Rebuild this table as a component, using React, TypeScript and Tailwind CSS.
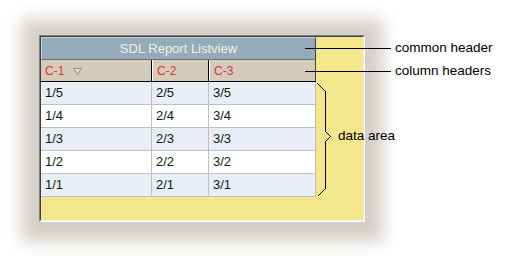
const rows = [
  ["1/5", "2/5", "3/5"],
  ["1/4", "2/4", "3/4"],
  ["1/3", "2/3", "3/3"],
  ["1/2", "2/2", "3/2"],
  ["1/1", "2/1", "3/1"],
]

function SortArrow() {
  return (
    <svg width="10" height="8" viewBox="0 0 10 8" className="ml-[9px] mt-[2px]">
      <polygon points="0.5,0.5 8.5,0.5 4.5,6.5" fill="#e4ddd0" stroke="#8c8c8c" strokeWidth="1" />
    </svg>
  )
}

export default function App() {
  return (
    <div className="relative w-[524px] h-[256px] overflow-hidden bg-white pl-[39px] pt-[35px] font-['Liberation_Sans',Arial,sans-serif]">
      {/* sunken panel */}
      <div className="w-[326px] h-[187px] border border-t-[#808080] border-l-[#808080] border-r-white border-b-white shadow-[0_2px_16px_18px_#d4d0c8]">
        <div className="h-full border border-t-[#404040] border-l-[#404040] border-r-[#ecebe4] border-b-[#ecebe4] bg-[#f4e68a]">
          <div className="w-[275px]">
            {/* common header */}
            <div className="h-[23px] flex items-center justify-center bg-[#95abb9] border-t border-l border-t-[#c9d5dd] border-l-[#c9d5dd] border-b border-b-[#5f6e78] border-r border-r-[#404040] text-[13px] text-[#f3f1e2]">
              SDL Report Listview
            </div>
            {/* column headers */}
            <div className="flex h-[22px] bg-[#d4cbba] border-b border-b-black text-[12px] text-[#e03434]">
              <div className="w-[111px] flex items-center pl-[4px] border-r border-r-black">
                C-1
                <SortArrow />
              </div>
              <div className="w-[57px] flex items-center pl-[4px] border-l border-l-white border-r border-r-black">C-2</div>
              <div className="w-[107px] flex items-center pl-[4px] border-l border-l-white border-r border-r-[#404040]">C-3</div>
            </div>
            {/* data area */}
            {rows.map((r, i) => (
              <div
                key={r[0]}
                className={`flex h-[23px] border-b border-b-[#c0c0c0] text-[13px] text-[#0a1e0a] ${i % 2 === 0 ? "bg-[#e9eef6]" : "bg-white"}`}
              >
                <div className="w-[111px] flex items-center pl-[4px] border-r border-r-[#c0c0c0]">{r[0]}</div>
                <div className="w-[57px] flex items-center pl-[4px] border-r border-r-[#c0c0c0]">{r[1]}</div>
                <div className="w-[107px] flex items-center pl-[4px] border-r border-r-[#c0c0c0]">{r[2]}</div>
              </div>
            ))}
          </div>
        </div>
      </div>

      {/* callouts */}
      <div className="absolute left-[305px] top-[48px] w-[86px] h-px bg-black" />
      <div className="absolute left-[395px] top-[40px] leading-[16px] text-[13.5px] text-black">common header</div>
      <div className="absolute left-[305px] top-[71px] w-[86px] h-px bg-black" />
      <div className="absolute left-[395px] top-[63px] leading-[16px] text-[13.5px] text-black">column headers</div>
      <svg className="absolute left-[314px] top-[82px]" width="20" height="118" viewBox="0 0 20 118" shapeRendering="crispEdges">
        <polyline
          points="3.5,1.5 11.5,9.5 11.5,49.5 16.5,54.5 11.5,59.5 11.5,106.5 3.5,114.5"
          fill="none"
          stroke="black"
          strokeWidth="1"
        />
      </svg>
      <div className="absolute left-[338px] top-[128px] leading-[16px] text-[13.5px] text-black">data area</div>
    </div>
  )
}
